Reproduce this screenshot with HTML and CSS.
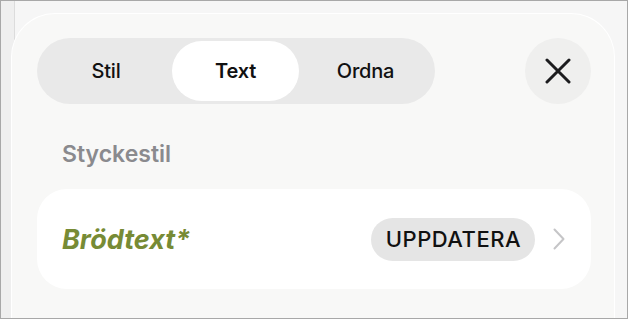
FILE: index.html
```html
<!DOCTYPE html>
<html lang="sv">
<head>
    <meta charset="UTF-8">
    <meta name="viewport" content="width=device-width, initial-scale=1.0">
    <title>Format</title>
    <link rel="stylesheet" href="styles.css">
</head>
<body>
    <div class="screen">
        <div class="sheet">
            <div class="top-row">
                <div class="segments">
                    <span class="seg">Stil</span>
                    <span class="seg active">Text</span>
                    <span class="seg">Ordna</span>
                </div>
                <button class="close-btn" aria-label="Stäng">
                    <svg width="26" height="26" viewBox="0 0 26 26">
                        <path d="M2 2 L24 24 M24 2 L2 24" stroke="#1c1c1e" stroke-width="3" stroke-linecap="round" fill="none"/>
                    </svg>
                </button>
            </div>

            <div class="section-title">Styckestil</div>

            <div class="style-card">
                <span class="style-name">Brödtext*</span>
                <span class="update-btn">UPPDATERA</span>
                <svg class="chevron" width="12" height="22" viewBox="0 0 12 22">
                    <path d="M1.5 1.5 L10.5 11 L1.5 20.5" stroke="#c5c5c7" stroke-width="2" fill="none" stroke-linecap="round" stroke-linejoin="round"/>
                </svg>
            </div>
        </div>
    </div>
</body>
</html>
```

FILE: styles.css
```css
* { margin: 0; padding: 0; box-sizing: border-box; font-family: Inter, Roboto, "Liberation Sans", sans-serif; }
body { width: 628px; height: 319px; overflow: hidden; }
.screen { width: 628px; height: 319px; border: 1px solid #a8a8a8; background: linear-gradient(to right, #efefef 0, #efefef 13px, #dcdcdc 13px, #dcdcdc 14px, #f6f6f6 14px); padding: 12px 12px 0 10px; }
.sheet { height: 100%; background-color: #f8f8f7; border: 1px solid #fff; border-bottom: none; border-radius: 44px 44px 0 0; padding: 24px 23px 0 25px; }
.top-row { display: flex; align-items: center; justify-content: space-between; }
.segments { display: flex; align-items: center; width: 398px; height: 66px; padding: 3px; background-color: #e9e9e9; border-radius: 33px; }
.seg { flex: 1; height: 60px; display: flex; align-items: center; justify-content: center; font-size: 20px; font-weight: 500; color: #111; border-radius: 30px; letter-spacing: -0.2px; }
.seg:first-child { flex: 0 0 132px; }
.seg.active { flex: 0 0 127px; background-color: #fff; font-weight: 600; }
.close-btn { width: 66px; height: 66px; border: none; border-radius: 50%; background-color: #efefee; display: flex; align-items: center; justify-content: center; }
.section-title { margin: 36px 0 0 25px; font-size: 23px; font-weight: 600; color: #8a8a8e; }
.style-card { display: flex; align-items: center; margin-top: 21px; height: 100px; background-color: #fff; border-radius: 30px; padding: 0 26px 0 25px; }
.style-name { flex: 1; font-size: 27px; font-weight: 700; font-style: italic; color: #778b35; }
.update-btn { height: 43px; padding: 0 14px 0 15px; display: flex; align-items: center; background-color: #e5e5e5; border-radius: 22px; font-size: 22px; font-weight: 500; color: #111; letter-spacing: 0.5px; }
.chevron { margin-left: 18px; }
```
